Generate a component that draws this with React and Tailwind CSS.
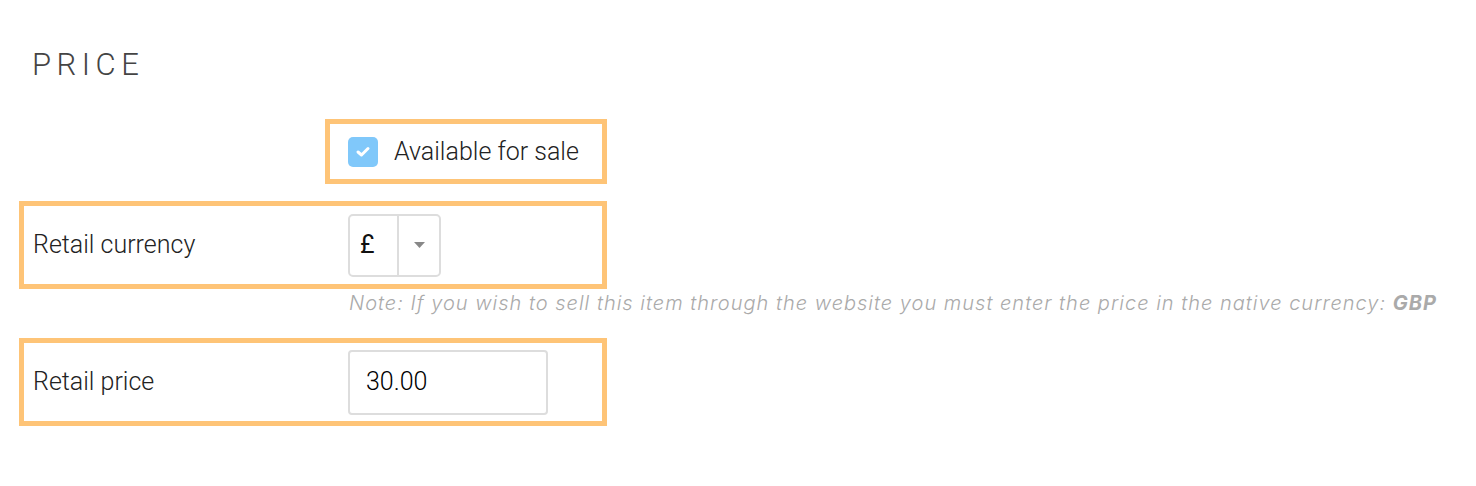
import React from "react";

export default function App() {
  return (
    <div className="w-[1476px] h-[486px] bg-white font-[Roboto,'Liberation_Sans',sans-serif] text-[#333]">
      <div className="pt-[46px] pl-[32px]">
        <h2 className="text-[31px] leading-[38px] tracking-[5.5px] text-[#444] font-light">PRICE</h2>
      </div>

      <div className="mt-[35px] ml-[325px] w-[282px] h-[65px] border-[5px] border-[#fec477] flex items-center pl-[18px]">
        <span className="w-[30px] h-[30px] rounded-[5px] bg-[#80c8fa] flex items-center justify-center">
          <svg width="16" height="13" viewBox="0 0 16 13">
            <path d="M3 7 L6.5 10 L13 3.5" fill="none" stroke="white" strokeWidth="3" strokeLinecap="round" strokeLinejoin="round" />
          </svg>
        </span>
        <span className="ml-[16px] text-[25px] font-light text-[#222]">Available for sale</span>
      </div>

      <div className="mt-[17px] ml-[19px] w-[588px] h-[88px] border-[5px] border-[#fec477] flex items-center">
        <span className="w-[324px] pl-[9px] text-[25px] font-light text-[#222]">Retail currency</span>
        <div className="w-[93px] h-[63px] border-2 border-[#dddddd] rounded-[5px] flex">
          <span className="w-[47px] flex items-center pl-[10px] text-[25px] font-normal text-[#111]">£</span>
          <span className="flex-1 border-l-2 border-[#dddddd] flex items-center justify-center">
            <svg width="11" height="6" viewBox="0 0 11 6"><path d="M0 0 H11 L5.5 6 Z" fill="#888" /></svg>
          </span>
        </div>
      </div>

      <div className="pl-[349px] pt-[1px] h-[49px] font-[Inter,sans-serif] text-[20px] italic font-light tracking-[1px] text-[#aaa] leading-[26px]">
        Note: If you wish to sell this item through the website you must enter the price in the native currency: <span className="font-bold">GBP</span>
      </div>

      <div className="ml-[19px] w-[588px] h-[88px] border-[5px] border-[#fec477] flex items-center">
        <span className="w-[324px] pl-[9px] text-[25px] font-light text-[#222]">Retail price</span>
        <div className="w-[200px] h-[65px] border-2 border-[#dddddd] rounded-[4px] flex items-center pl-[16px] text-[25px] font-light text-[#000]">
          30.00
        </div>
      </div>
    </div>
  );
}
